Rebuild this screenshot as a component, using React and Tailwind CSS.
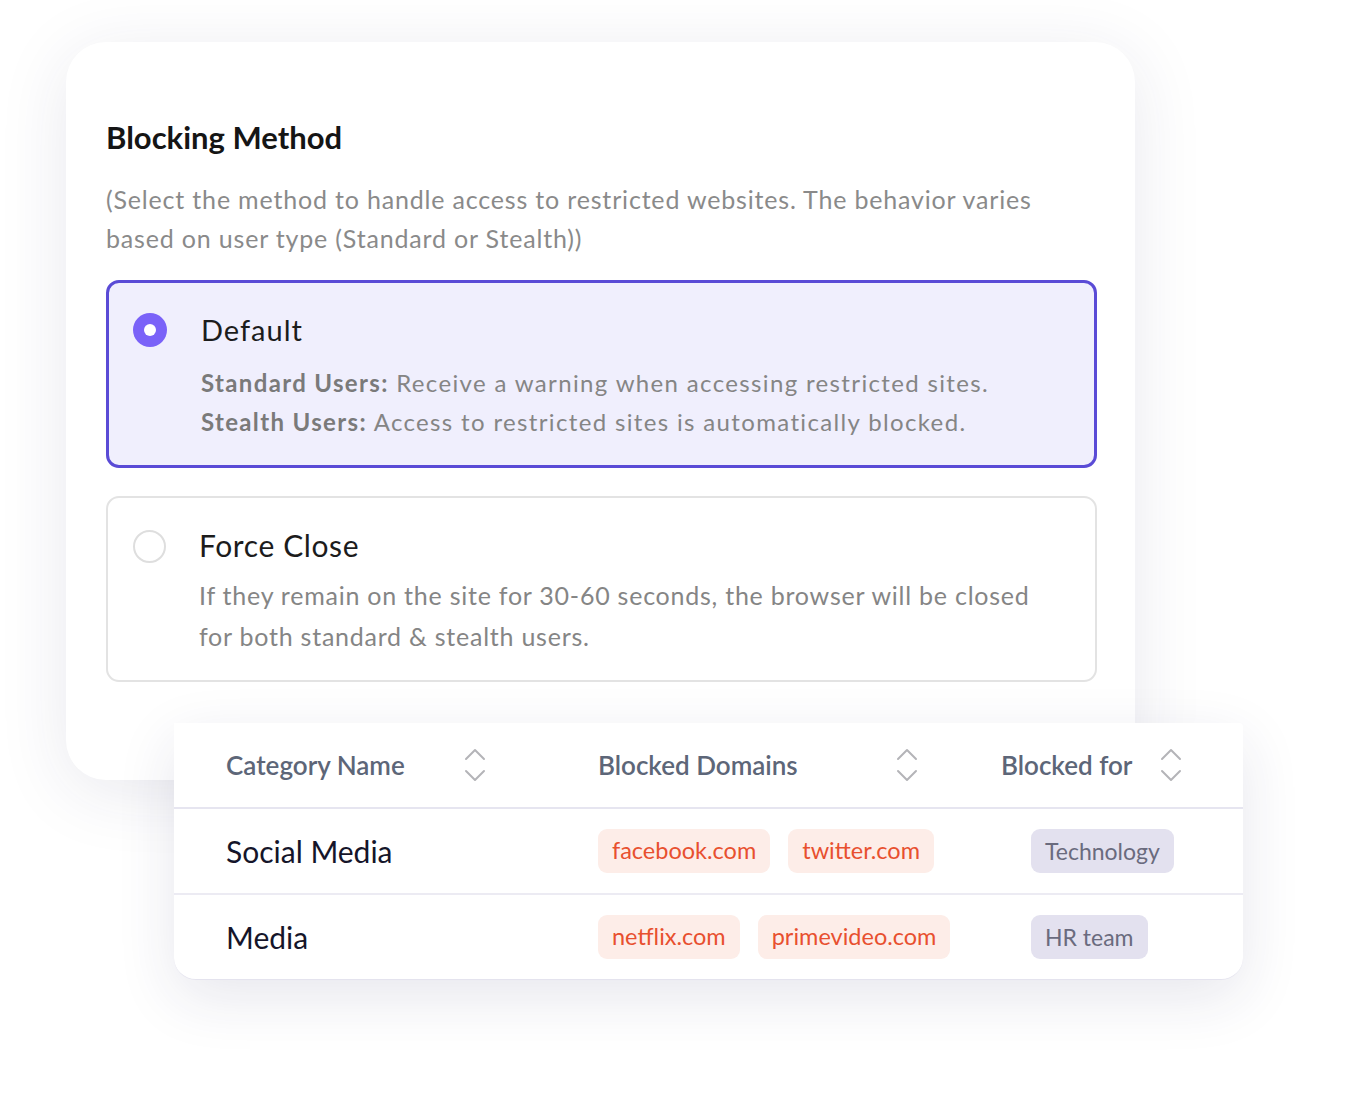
import React from "react";

function SortIcon() {
  return (
    <svg width="22" height="36" viewBox="0 0 22 36" fill="none" stroke="#b4b4b8" strokeWidth="2" strokeLinecap="round" strokeLinejoin="round">
      <path d="M2 12 L11 3 L20 12" />
      <path d="M2 24 L11 33 L20 24" />
    </svg>
  );
}

function Domain({ children }) {
  return (
    <span className="inline-flex h-[44px] items-center rounded-[9px] bg-[#fdede8] px-[14px] text-[23.5px] text-[#e8502f]">
      {children}
    </span>
  );
}

function Tag({ children }) {
  return (
    <span className="inline-flex h-[44px] items-center rounded-[9px] bg-[#e3e1ef] px-[14px] text-[23px] text-[#6a6b7e]">
      {children}
    </span>
  );
}

export default function App() {
  return (
    <div className="min-h-[1113px] w-[1354px] bg-white pl-[66px] pt-[42px] font-['Lato','Noto_Sans',sans-serif]">
      <div className="relative w-[1069px] h-[738px] rounded-[40px] bg-white pl-[40px] pr-[38px] pt-[77px] shadow-[0_12px_70px_rgba(40,40,90,0.10)]">
        <h1 className="text-[31px] leading-[36px] font-bold text-[#151515]">Blocking Method</h1>
        <p className="mt-[25px] w-[960px] text-[25px] leading-[38.5px] tracking-[0.82px] text-[#8a8a8a]">
          (Select the method to handle access to restricted websites. The behavior varies based on user type (Standard or Stealth))
        </p>
        <div className="mt-[23px] flex w-[991px] h-[188px] rounded-[13px] border-[3px] border-[#5a4bd6] bg-[#f0effd] pt-[27px]">
          <div className="w-[82px] shrink-0 flex justify-center pt-[3px]">
            <div className="h-[34px] w-[34px] rounded-full bg-[#7a62f8] flex items-center justify-center">
              <div className="h-[12px] w-[12px] rounded-full bg-white" />
            </div>
          </div>
          <div className="pl-[10px]">
            <div className="text-[29px] leading-[40px] tracking-[1px] text-[#1c1c1c]">Default</div>
            <div className="mt-[14px] text-[24px] leading-[38.5px] tracking-[1.35px] text-[#858585]">
              <div><span className="font-bold text-[#7a7a7a]">Standard Users:</span> Receive a warning when accessing restricted sites.</div>
              <div><span className="font-bold text-[#7a7a7a]">Stealth Users:</span> Access to restricted sites is automatically blocked.</div>
            </div>
          </div>
        </div>
        <div className="mt-[28px] flex w-[991px] h-[186px] rounded-[13px] border-2 border-[#e3e3e3] bg-white pt-[27px]">
          <div className="w-[82px] shrink-0 flex justify-center pt-[5px]">
            <div className="h-[33px] w-[33px] rounded-full border-2 border-[#dedede] bg-white" />
          </div>
          <div className="pl-[9px]">
            <div className="text-[30px] leading-[40px] tracking-[0.6px] text-[#1c1c1c]">Force Close</div>
            <div className="mt-[10px] w-[845px] text-[25px] leading-[41px] tracking-[0.76px] text-[#858585]">
              If they remain on the site for 30-60 seconds, the browser will be closed for both standard &amp; stealth users.
            </div>
          </div>
        </div>
      </div>

      <div className="relative -mt-[57px] ml-[108px] w-[1069px] rounded-b-[22px] rounded-tr-[4px] border-b border-[#e4e3ee] bg-white shadow-[0_18px_60px_rgba(40,40,90,0.11)]">
        <div className="grid h-[86px] grid-cols-[372px_403px_1fr] items-center border-b-2 border-[#e6e5f0] pl-[52px]">
          <div className="flex items-center">
            <span className="w-[238px] text-[26px] font-semibold text-[#5d6678]">Category Name</span>
            <SortIcon />
          </div>
          <div className="flex items-center">
            <span className="w-[298px] text-[26px] font-semibold text-[#5d6678]">Blocked Domains</span>
            <SortIcon />
          </div>
          <div className="flex items-center">
            <span className="w-[159px] text-[26px] font-semibold text-[#5d6678]">Blocked for</span>
            <SortIcon />
          </div>
        </div>
        <div className="grid h-[86px] grid-cols-[372px_403px_1fr] items-center border-b-2 border-[#ecebf3] pl-[52px]">
          <div className="text-[30px] text-[#15152a]">Social Media</div>
          <div className="flex gap-[18px]">
            <Domain>facebook.com</Domain>
            <Domain>twitter.com</Domain>
          </div>
          <div className="pl-[30px]">
            <Tag>Technology</Tag>
          </div>
        </div>
        <div className="grid h-[84px] grid-cols-[372px_403px_1fr] items-center pl-[52px]">
          <div className="text-[30px] text-[#15152a]">Media</div>
          <div className="flex gap-[18px]">
            <Domain>netflix.com</Domain>
            <Domain>primevideo.com</Domain>
          </div>
          <div className="pl-[30px]">
            <Tag>HR team</Tag>
          </div>
        </div>
      </div>
    </div>
  );
}
